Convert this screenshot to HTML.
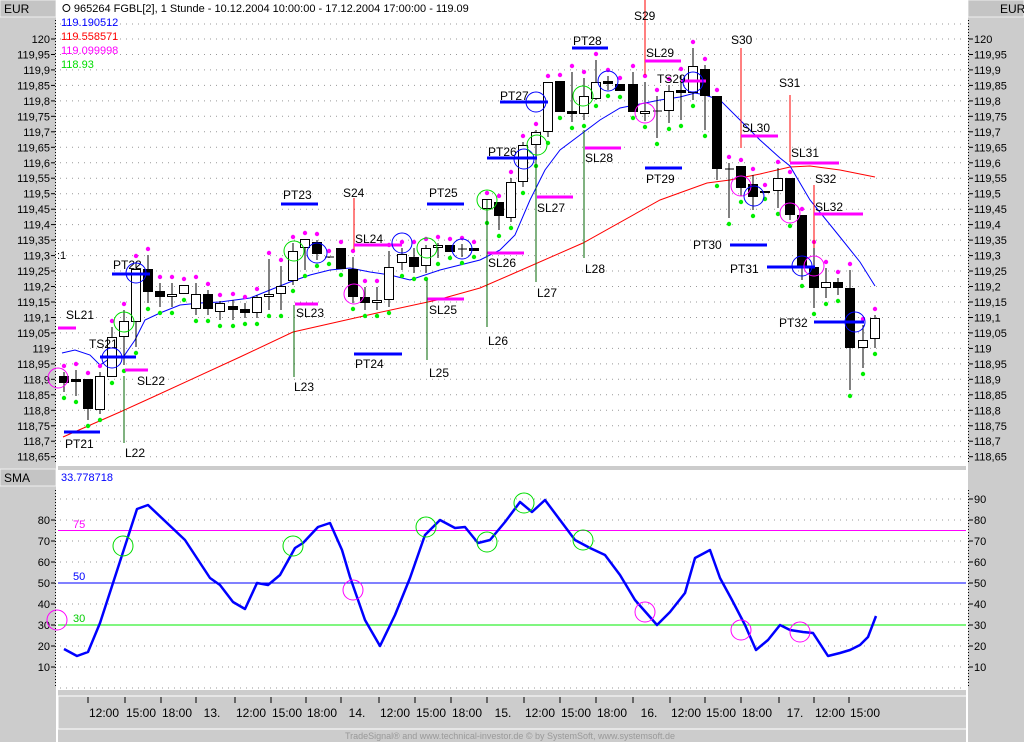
<!DOCTYPE html>
<html><head><meta charset="utf-8"><style>
html,body{margin:0;padding:0;background:#fff;width:1024px;height:742px;overflow:hidden}
svg{display:block;font-family:"Liberation Sans",sans-serif}
</style></head><body>
<svg id="s" width="1024" height="742" xmlns="http://www.w3.org/2000/svg"></svg>
<script>
var S=document.getElementById('s');var o='';
function P(p){return 39+(120-p)*309.4;}
function O(v){return 520+(80-v)*2.1;}
// backgrounds
o+='<rect x="0" y="0" width="1024" height="742" fill="#cccccc"/>';
o+='<rect x="58" y="0" width="909" height="466" fill="#fff"/>';
o+='<rect x="58" y="470" width="909" height="220" fill="#fff"/>';
o+='<rect x="58" y="696" width="909" height="33" fill="#cccccc" stroke="#fff" stroke-width="1"/>';
o+='<rect x="0" y="0" width="56" height="17" fill="#c4c4c4" stroke="#eee"/>';
o+='<rect x="968" y="0" width="56" height="17" fill="#c4c4c4" stroke="#eee"/>';
o+='<rect x="0" y="469" width="56" height="17" fill="#c4c4c4" stroke="#eee"/>';
o+='<text x="4" y="13" font-size="12">EUR</text><text x="1000" y="13" font-size="12">EUR</text><text x="4" y="482" font-size="12">SMA</text>';
o+='<line x1="57" y1="0" x2="57" y2="742" stroke="#fff" stroke-width="2"/>';
o+='<line x1="55.5" y1="20" x2="55.5" y2="464" stroke="#000" stroke-dasharray="1,2"/>';
o+='<line x1="55.5" y1="490" x2="55.5" y2="688" stroke="#000" stroke-dasharray="1,2"/>';
o+='<line x1="967" y1="0" x2="967" y2="742" stroke="#fff" stroke-width="2"/>';
o+='<line x1="968.5" y1="20" x2="968.5" y2="464" stroke="#000" stroke-dasharray="1,2"/>';
o+='<line x1="968.5" y1="490" x2="968.5" y2="688" stroke="#000" stroke-dasharray="1,2"/>';
// price grid & labels
for(var i=0;i<=27;i++){var p=120-i*0.05;var y=P(p);var t=(Math.round(p*100)/100).toString().replace('.',',');
o+='<line x1="60" y1="'+y.toFixed(1)+'" x2="966" y2="'+y.toFixed(1)+'" stroke="#999" stroke-dasharray="1,5"/>';
o+='<text x="50" y="'+(y+4).toFixed(1)+'" font-size="11" text-anchor="end">'+t+'</text><line x1="51" y1="'+y.toFixed(1)+'" x2="55" y2="'+y.toFixed(1)+'" stroke="#000"/>';
o+='<text x="974" y="'+(y+4).toFixed(1)+'" font-size="11">'+t+'</text><line x1="969" y1="'+y.toFixed(1)+'" x2="973" y2="'+y.toFixed(1)+'" stroke="#000"/>';}
o+='<line x1="60" y1="24" x2="966" y2="24" stroke="#999" stroke-dasharray="1,5"/>';
o+='<text x="57" y="259" font-size="11">:1</text>';
// osc grid
for(var v=0;v<=90;v+=10){var y=O(v);o+='<line x1="60" y1="'+y+'" x2="966" y2="'+y+'" stroke="#999" stroke-dasharray="1,5"/>';
if(v>=10&&v<=80){o+='<text x="50" y="'+(y+4)+'" font-size="11" text-anchor="end">'+v+'</text><line x1="51" y1="'+y+'" x2="55" y2="'+y+'" stroke="#000"/>';}
if(v>=10){o+='<text x="974" y="'+(y+4)+'" font-size="11">'+v+'</text><line x1="969" y1="'+y+'" x2="973" y2="'+y+'" stroke="#000"/>';}}
o+='<line x1="58" y1="'+O(75)+'" x2="966" y2="'+O(75)+'" stroke="#ff00ff"/><text x="73" y="528" font-size="11" fill="#ff00ff">75</text>';
o+='<line x1="58" y1="'+O(50)+'" x2="966" y2="'+O(50)+'" stroke="#0000ff"/><text x="73" y="580" font-size="11" fill="#0000ff">50</text>';
o+='<line x1="58" y1="'+O(30)+'" x2="966" y2="'+O(30)+'" stroke="#00ee00"/><text x="73" y="622" font-size="11" fill="#00cc00">30</text>';
// header text
o+='<text x="62" y="12" font-size="11">&#x2B58; 965264  FGBL[2], 1 Stunde - 10.12.2004 10:00:00 - 17.12.2004 17:00:00 - 119.09</text>';
o+='<text x="61" y="26" font-size="11" fill="#0000ff">119.190512</text><text x="61" y="40" font-size="11" fill="#ff0000">119.558571</text><text x="61" y="54" font-size="11" fill="#ff00ff">119.099998</text><text x="61" y="68" font-size="11" fill="#00dd00">118.93</text>';
o+='<text x="61" y="481" font-size="11" fill="#0000ff">33.778718</text>';
// red & blue lines
o+='<polyline fill="none" stroke="#ff0000" points="63,437 120,412 153,397 240,357 293,332 377,313 437,300 480,288 510,275 583,243 660,200 707,183 730,180 760,174 790,167 810,166 840,170 875,177"/>';
o+='<polyline fill="none" stroke="#0000ff" points="62,353 75,350 90,355 100,365 112,357 124,356 135,340 145,320 160,313 180,305 200,303 220,302 250,298 270,290 290,282 310,275 330,270 350,268 370,272 390,275 410,280 440,270 480,260 500,250 515,235 530,200 545,170 560,150 580,135 600,120 620,108 640,104 660,100 680,97 695,93 705,95 720,100 740,120 760,140 780,158 790,166 810,200 840,237 860,262 875,286"/>';
// candles: x,o,c,h,l (pixel y); black if c>o (down)
var C=[[64,376,383,372,392],[76,379,382,370,396],[88,379,409,379,420],[100,410,376,372,414],[112,377,337,327,377],[124,337,321,310,365],[136,322,269,262,347],[148,269,292,255,303],[160,291,297,283,307],[172,297,294,283,307],[184,294,285,285,294],[196,309,294,283,315],[208,294,309,290,315],[220,312,303,301,320],[233,306,310,300,320],[245,309,313,303,318],[257,313,297,295,318],[269,297,294,259,310],[281,294,286,266,310],[293,281,251,243,285],[305,248,239,239,270],[317,242,254,240,260],[329,257,258,257,258],[341,248,269,248,269],[353,269,297,257,303],[365,297,303,287,310],[377,303,300,287,310],[389,300,267,251,307],[402,263,254,248,270],[414,257,267,248,273],[426,266,248,245,273],[438,248,245,243,258],[450,245,252,245,252],[462,249,249,244,257],[474,248,251,248,251],[487,209,199,199,217],[499,202,216,202,230],[511,218,182,178,222],[523,182,145,142,187],[536,145,132,130,160],[548,132,82,82,137],[560,81,112,81,112],[572,111,114,72,122],[584,114,96,78,120],[596,99,82,60,100],[608,81,84,76,90],[620,84,91,84,91],[633,84,112,72,112],[645,114,111,82,121],[657,111,111,96,138],[669,111,91,85,123],[681,90,93,75,120],[693,93,66,48,100],[705,69,96,65,130],[717,96,169,96,180],[729,169,169,163,218],[741,166,188,166,196],[753,184,197,175,210],[765,193,191,191,193],[778,191,178,168,208],[790,178,215,178,220],[802,215,267,215,280],[814,267,288,248,308],[826,288,282,268,298],[838,282,288,278,295],[850,288,348,270,390],[863,348,340,325,368],[875,339,318,315,348]];
C.forEach(function(c){var x=c[0],top=Math.min(c[1],c[2]),bot=Math.max(c[1],c[2]),dn=c[2]>c[1];
o+='<line x1="'+x+'" y1="'+c[3]+'" x2="'+x+'" y2="'+c[4]+'" stroke="#000"/>';
var h=Math.max(bot-top,1);
if(h<=1)o+='<line x1="'+(x-4)+'" y1="'+top+'" x2="'+(x+5)+'" y2="'+top+'" stroke="#000"/>';
else o+='<rect x="'+(x-4.5)+'" y="'+(top+0.5)+'" width="9" height="'+(h-1)+'" fill="'+(dn?'#000':'#fff')+'" stroke="#000"/>';
o+='<circle cx="'+x+'" cy="'+(c[3]-6)+'" r="2.2" fill="#ff00ff"/><circle cx="'+x+'" cy="'+(c[4]+6)+'" r="2.2" fill="#00ee00"/>';});
// level lines
function L(x1,x2,y,col,w){o+='<line x1="'+x1+'" y1="'+y+'" x2="'+x2+'" y2="'+y+'" stroke="'+col+'" stroke-width="'+w+'"/>';}
function V(x,y1,y2,col){o+='<line x1="'+x+'" y1="'+y1+'" x2="'+x+'" y2="'+y2+'" stroke="'+col+'"/>';}
function T(x,y,t){o+='<text x="'+x+'" y="'+y+'" font-size="12">'+t+'</text>';}
var B='#0000ff',M='#ff00ff',G='#006600',R='#ff0000';
L(64,100,432,B,3);T(65,448,'PT21');V(124,376,443,G);T(125,457,'L22');
L(58,76,328,M,3);T(66,319,'SL21');T(89,348,'TS21');L(100,136,357,B,3);
L(112,150,274,B,3);T(113,269,'PT22');L(125,148,370,M,3);T(137,385,'SL22');
L(281,318,204,B,3);T(283,199,'PT23');L(295,318,304,M,3);T(296,317,'SL23');V(294,305,377,G);T(294,391,'L23');
V(354,198,250,R);T(343,197,'S24');L(354,402,245,M,3);T(355,243,'SL24');L(354,402,354,B,3);T(355,368,'PT24');
L(427,464,204,B,3);T(429,197,'PT25');L(427,464,299,M,3);T(429,314,'SL25');V(427,280,360,G);T(429,377,'L25');
L(487,537,158,B,3);T(488,156,'PT26');L(487,524,253,M,3);T(488,267,'SL26');V(487,200,327,G);T(488,345,'L26');
L(500,548,102,B,3);T(500,100,'PT27');L(537,573,197,M,3);T(537,212,'SL27');V(536,160,282,G);T(537,297,'L27');
L(572,608,48,B,3);T(573,45,'PT28');L(585,621,148,M,3);T(585,162,'SL28');V(584,130,258,G);T(585,273,'L28');
V(645,0,75,R);T(634,20,'S29');L(645,681,61,M,3);T(646,57,'SL29');L(681,706,81,M,3);T(657,83,'TS29');L(645,682,168,B,3);T(646,183,'PT29');
V(741,48,148,R);T(731,44,'S30');L(741,778,136,M,3);T(742,132,'SL30');L(730,767,245,B,3);T(693,249,'PT30');
V(790,95,162,R);T(779,87,'S31');L(790,839,163,M,3);T(791,157,'SL31');L(767,815,267,B,3);T(730,273,'PT31');
V(814,185,248,R);T(815,183,'S32');L(814,863,214,M,3);T(815,211,'SL32');L(814,864,322,B,3);T(779,327,'PT32');
// circles main
function K(x,y,col){o+='<circle cx="'+x+'" cy="'+y+'" r="10" fill="none" stroke="'+col+'"/>';}
var g='#00dd00';
[[136,273,B],[124,322,g],[112,358,B],[58,378,M],[294,251,g],[317,253,B],[354,294,M],[402,243,B],[427,248,g],[462,249,B],[487,200,g],[536,102,B],[524,159,B],[537,145,g],[583,96,g],[608,81,B],[645,113,M],[693,82,B],[741,186,M],[754,196,B],[790,213,M],[802,266,B],[814,266,M],[855,322,B]].forEach(function(a){K(a[0],a[1],a[2]);});
// oscillator
o+='<polyline fill="none" stroke="#0000ff" stroke-width="2.5" stroke-linejoin="round" points="64,649 77,656 88,652 100,623 113,583 137,509 148,505 185,540 210,578 220,585 233,602 245,609 257,583 268,585 280,575 295,548 303,543 318,527 330,523 342,550 350,577 365,620 380,646 395,615 410,578 425,535 440,520 455,528 465,527 478,543 490,540 505,522 520,502 532,512 545,500 560,520 575,540 590,548 605,555 620,575 635,600 650,617 657,625 670,612 685,593 695,558 710,550 720,578 732,600 745,625 756,650 768,640 780,625 790,630 803,632 813,633 828,656 840,653 850,650 860,645 868,637 876,616"/>';
[[123,546,g],[293,546,g],[426,527,g],[487,542,g],[524,503,g],[583,540,g],[57,620,M],[353,590,M],[645,612,M],[741,630,M],[800,632,M]].forEach(function(a){K(a[0],a[1],a[2]);});
// time axis
[['12:00',104],['15:00',141],['18:00',177],['13.',212],['12:00',251],['15:00',287],['18:00',322],['14.',357],['12:00',395],['15:00',431],['18:00',467],['15.',503],['12:00',540],['15:00',576],['18:00',612],['16.',649],['12:00',686],['15:00',721],['18:00',757],['17.',795],['12:00',830],['15:00',865]].forEach(function(a){
o+='<line x1="'+(a[1]-16)+'" y1="697" x2="'+(a[1]-16)+'" y2="703" stroke="#000"/><text x="'+a[1]+'" y="717" font-size="12" text-anchor="middle">'+a[0]+'</text>';});
o+='<text x="510" y="739" font-size="9" fill="#999" text-anchor="middle">TradeSignal® and www.technical-investor.de © by SystemSoft, www.systemsoft.de</text>';
S.innerHTML=o;
</script>
</body></html>
